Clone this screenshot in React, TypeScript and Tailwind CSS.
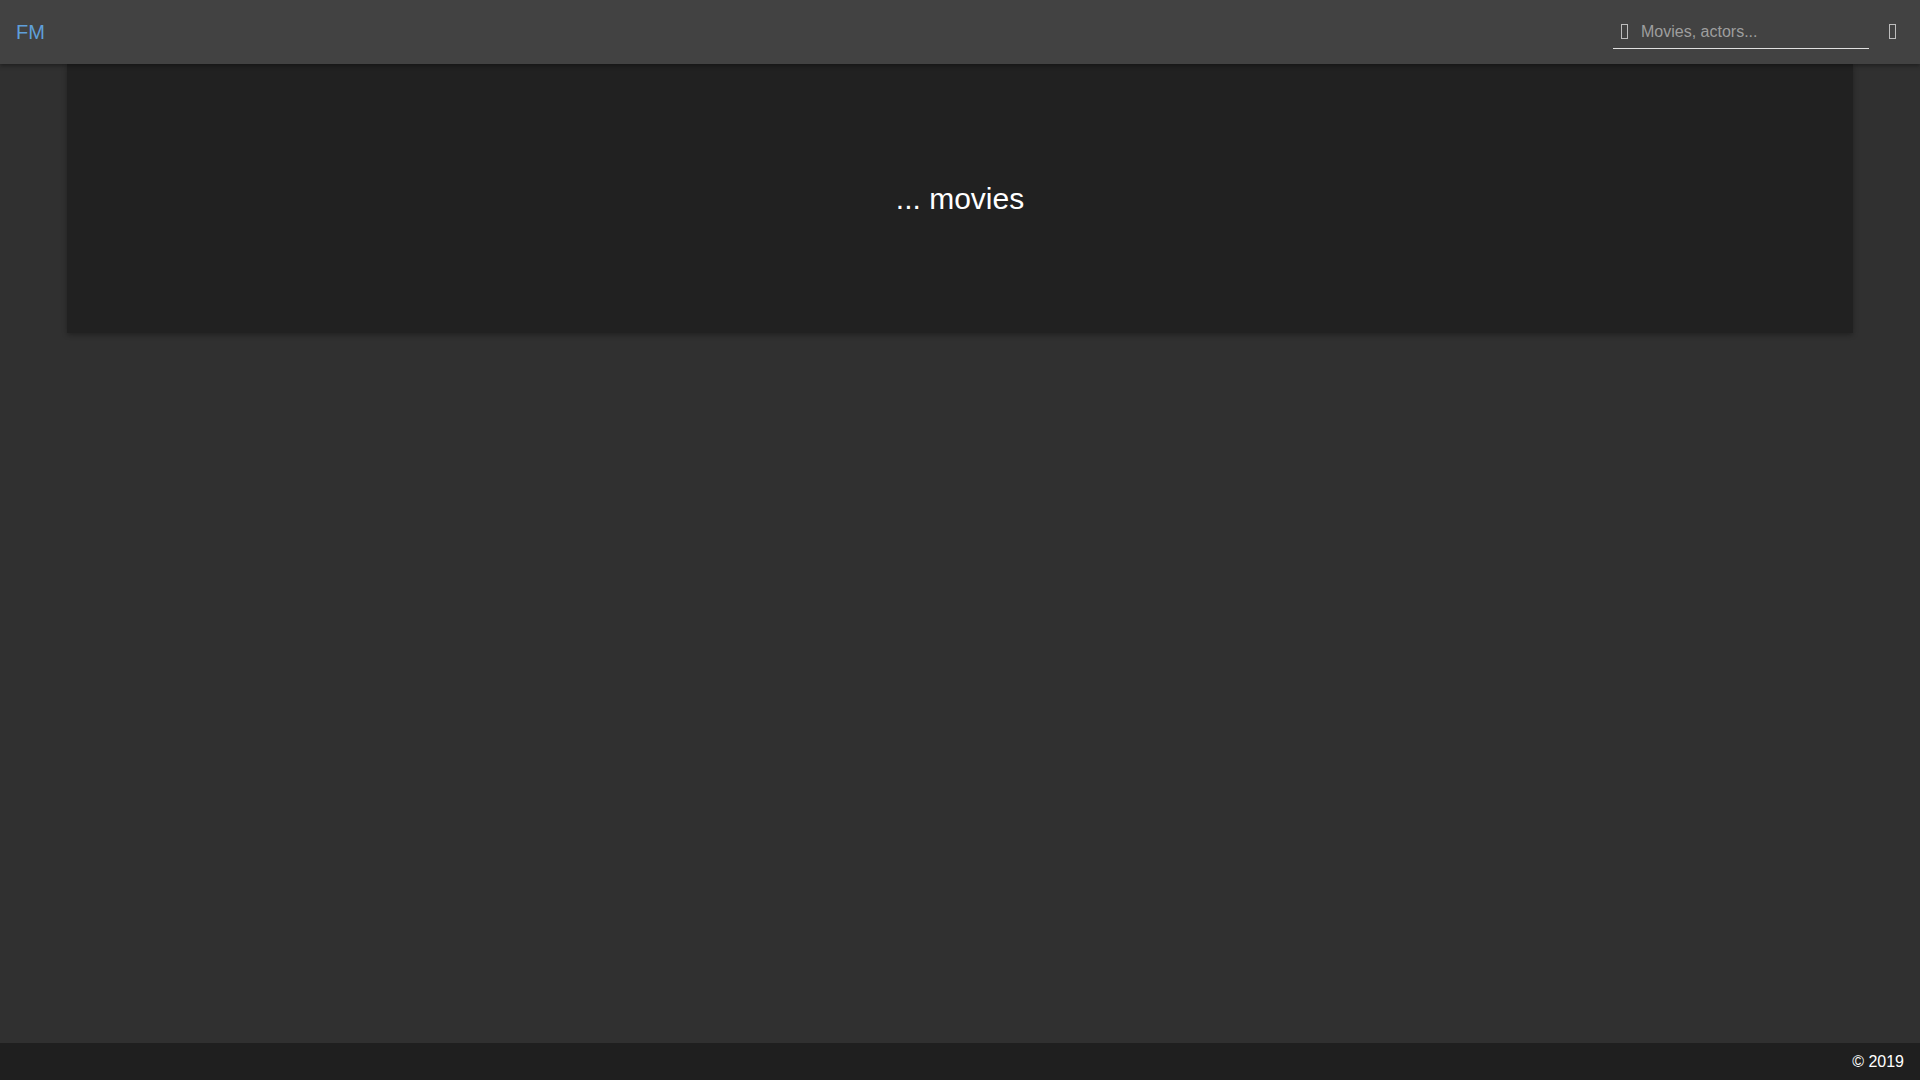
import React from 'react';

// Tofu-like box the page shows where the icon font is missing
function MissingIcon() {
  return <span className="inline-block h-[15px] w-[7px] border border-[#bdbdbd]" />;
}

export default function App() {
  return (
    <div className="flex min-h-screen flex-col bg-[#303030] font-['Liberation_Sans',Arial,sans-serif] text-white">
      <header className="relative z-10 flex h-16 items-center justify-between bg-[#424242] pl-4 pr-6 shadow-[0_2px_4px_rgba(0,0,0,0.35)]">
        <span className="text-[20px] text-[#5f9fd9]">FM</span>
        <div className="flex items-center">
          <div className="flex h-[34px] w-[256px] items-center border-b border-[#e0e0e0] pl-2">
            <MissingIcon />
            <input
              className="ml-[13px] flex-1 bg-transparent text-[16px] text-white placeholder-[#9e9e9e] outline-none"
              placeholder="Movies, actors..."
            />
          </div>
          <span className="ml-5 flex h-[34px] items-center pb-[1px]">
            <MissingIcon />
          </span>
        </div>
      </header>

      <main className="flex-1">
        <div className="mx-auto flex h-[269px] w-[93%] items-center justify-center bg-[#212121] shadow-[0_2px_5px_rgba(0,0,0,0.3)]">
          <span className="text-[30px]">... movies</span>
        </div>
      </main>

      <footer className="flex h-[37px] items-center justify-end bg-[#1f1f1f] px-4 text-[16px]">
        © 2019
      </footer>
    </div>
  );
}
